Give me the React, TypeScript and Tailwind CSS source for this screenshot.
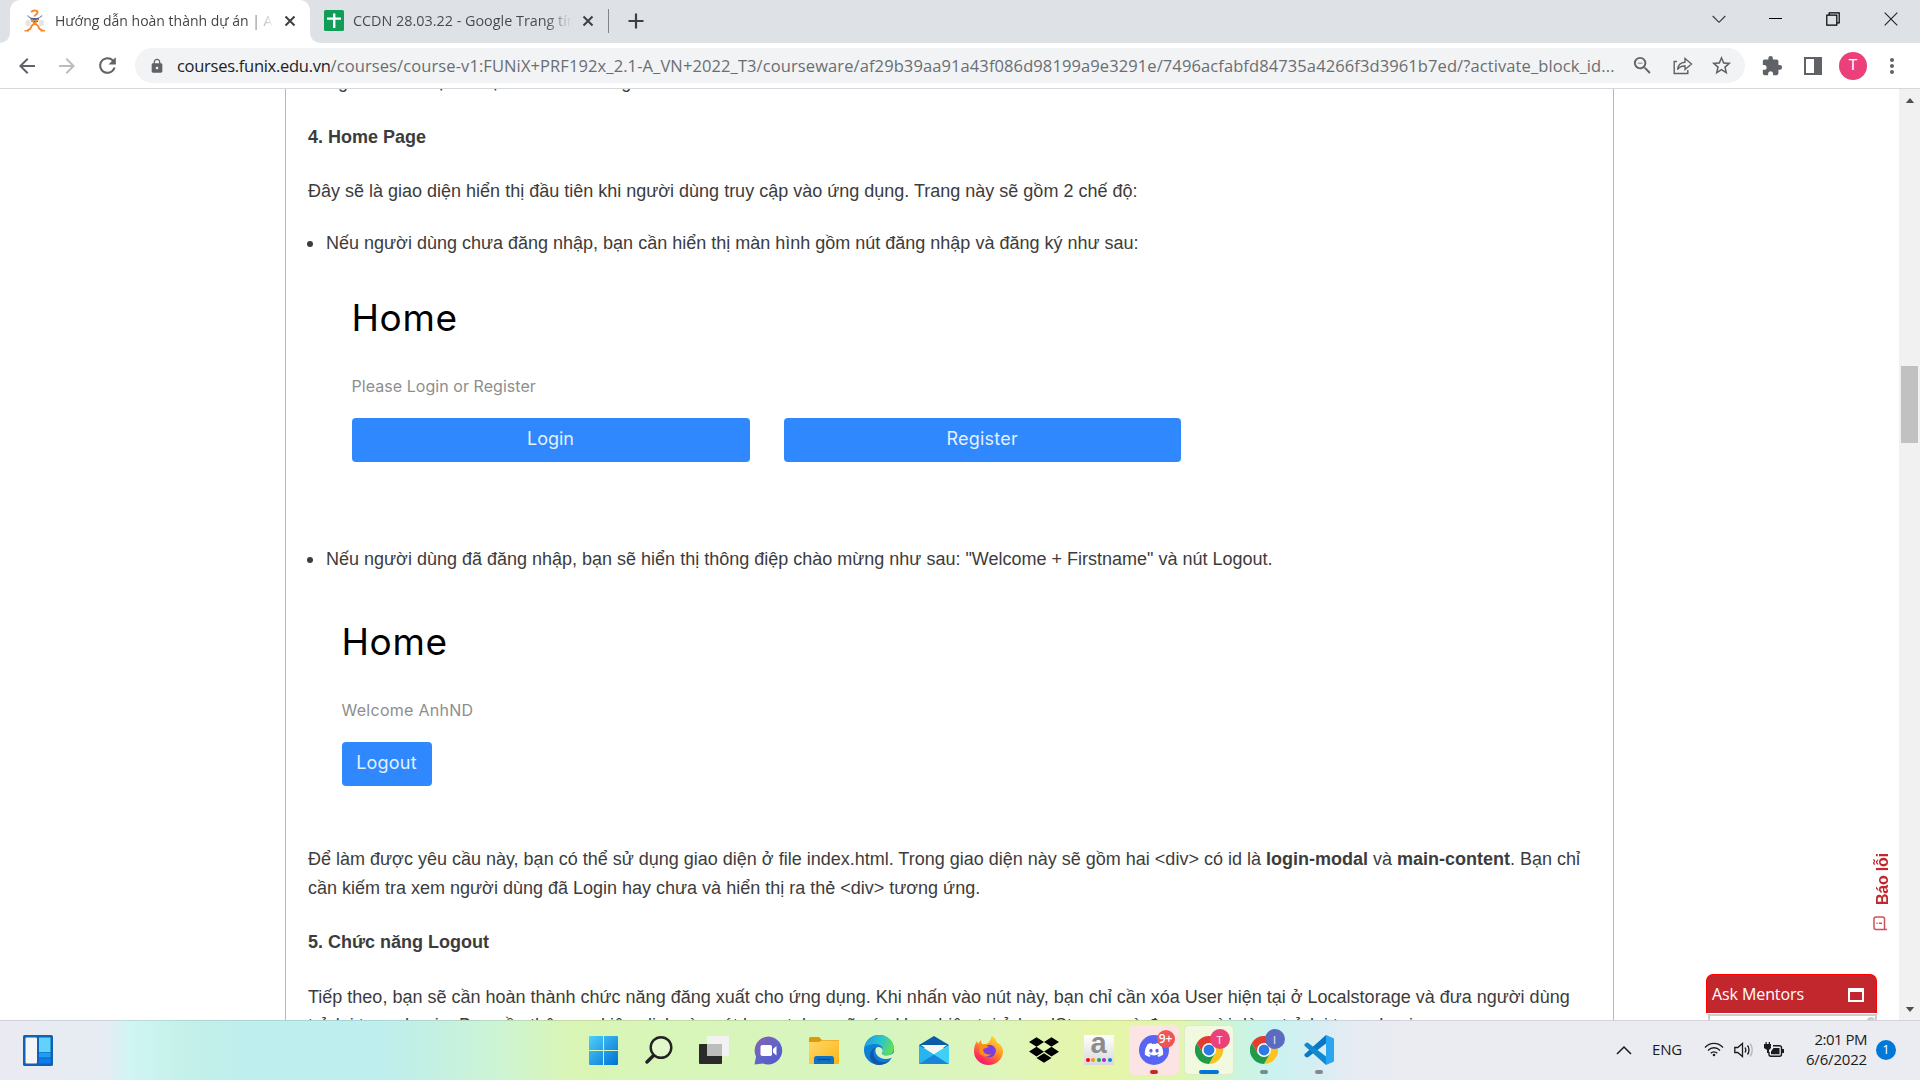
import React from 'react';
import {
  MdArrowBack,
  MdArrowForward,
  MdExtension,
  MdLock,
  MdMoreVert,
  MdRefresh,
  MdStarBorder,
  MdZoomOut,
} from 'react-icons/md';
import { FaDiscord, FaDropbox } from 'react-icons/fa';

/* ---------- Browser chrome ---------- */

function CloseX({ className }: { className: string }) {
  return (
    <svg viewBox="0 0 12 12" className={className} fill="none" stroke="#3c4043" strokeWidth="2">
      <path d="M1.5 1.5l9 9M10.5 1.5l-9 9" />
    </svg>
  );
}

function FunixIcon() {
  return (
    <svg viewBox="0 0 22 23" className="h-[23px] w-[22px] shrink-0" fill="none">
      <ellipse cx="4" cy="14" rx="2.6" ry="3.2" fill="#e2e5ea" />
      <ellipse cx="17.500" cy="14" rx="2.6" ry="3.2" fill="#e2e5ea" />
      <path d="M7.5 3.4C8 .8 13.500 .6 13.500 3.6c0 2-2.9 1.800-2.900 4" stroke="#f58a2c" strokeWidth="2" />
      <path d="M3.500 6.500c2 3.200 4 3 7 3.500 3-.500 5.500-.300 7.500-3.500" stroke="#8b8f9c" strokeWidth="1.200" />
      <path d="M6.500 10h8.500M7.500 12.200h6.500" stroke="#2f4f86" strokeWidth="1.500" />
      <path d="M7.500 10.500l3.200 4 3.300-4M10.700 14l-3.200 3-1 2.500L3 21.800M10.700 14l3.500 3 1 2.500 3.500 2.300" stroke="#f58a2c" strokeWidth="1.900" />
      <path d="M.5 21.800h4.500M16.500 21.800H21" stroke="#f58a2c" strokeWidth="1.600" />
    </svg>
  );
}

function SheetsIcon() {
  return (
    <svg viewBox="0 0 20 21" className="h-[21px] w-5 shrink-0">
      <rect width="20" height="21" rx="1.600" fill="#0f9d58" />
      <path d="M9 3.500h2.400v3.900H17v2.400h-5.600V18H9V9.800H3V7.400h6z" fill="#fff" />
    </svg>
  );
}

function TabStrip() {
  return (
    <div className="flex h-[43px] bg-[#dee1e6]">
      <div className="flex w-[10px] items-end bg-white">
        <div className="h-full w-full rounded-br-[10px] bg-[#dee1e6]" />
      </div>
      <div className="bg-[#dee1e6]">
        <div className="flex h-full w-[300px] items-center rounded-t-[10px] bg-white pb-[2px] pl-[14px]">
          <FunixIcon />
          <div className="ml-[9px] w-[219px] overflow-hidden whitespace-nowrap bg-gradient-to-r from-[#3c4043] from-88% to-transparent bg-clip-text text-[14px] leading-6 text-transparent">
            Hướng dẫn hoàn thành dự án | AS
          </div>
          <CloseX className="ml-[10px] h-3 w-3 shrink-0" />
        </div>
      </div>
      <div className="bg-white">
        <div className="flex h-full w-[299px] items-center rounded-bl-[10px] bg-[#dee1e6] pb-[2px] pl-[14px]">
          <SheetsIcon />
          <div className="ml-[9px] w-[219px] overflow-hidden whitespace-nowrap bg-gradient-to-r from-[#45494d] from-88% to-transparent bg-clip-text text-[14.400px] leading-6 tracking-[-0.01px] text-transparent">
            CCDN 28.03.22 - Google Trang tính
          </div>
          <CloseX className="ml-[10px] h-3 w-3 shrink-0" />
          <div className="ml-auto h-6 w-px bg-[#808387]" />
        </div>
      </div>
      <div className="flex items-center pb-px pl-[19px]">
        <svg viewBox="0 0 16 16" className="h-4 w-4" stroke="#3c4043" strokeWidth="2.2">
          <path d="M8 .5v15M.5 8h15" />
        </svg>
      </div>
      <div className="ml-auto flex h-[37px] items-center pr-[22px]">
        <svg viewBox="0 0 14 14" className="h-[14px] w-[14px]" fill="none" stroke="#333" strokeWidth="1.100">
          <path d="M.7 4l6.300 6.300L13.300 4" />
        </svg>
        <div className="ml-[43px] h-px w-[13px] bg-black" />
        <svg viewBox="0 0 14 14" className="ml-11 h-[14px] w-[14px]" fill="none" stroke="#000" strokeWidth="1.200">
          <path d="M.8 3.200h10v10h-10zM3.200 3V.8h10v10H11" />
        </svg>
        <svg viewBox="0 0 14 14" className="ml-11 h-[14px] w-[14px]" stroke="#222" strokeWidth="1.100">
          <path d="M.7.7l12.600 12.600M13.300.7L.7 13.300" />
        </svg>
      </div>
    </div>
  );
}

function Toolbar() {
  return (
    <div className="flex h-[46px] items-center border-b border-[#d5d7da] bg-white pl-[15px] text-[#5f6368]">
      <MdArrowBack className="h-6 w-6" />
      <MdArrowForward className="ml-4 h-6 w-6 text-[#bbbdc0]" />
      <MdRefresh className="ml-4 h-[25px] w-[25px]" />
      <div className="ml-[15px] flex h-[35px] w-[1610px] shrink-0 items-center rounded-full bg-[#f1f3f4] pl-[14px]">
        <MdLock className="h-4 w-4" />
        <div className="ml-3 whitespace-nowrap text-[16.500px] leading-6 tracking-[0.100px] text-[#6a6e73]">
          <span className="tracking-[-0.280px] text-[#202124]">courses.funix.edu.vn</span>
          /courses/course-v1:FUNiX+PRF192x_2.1-A_VN+2022_T3/courseware/af29b39aa91a43f086d98199a9e3291e/7496acfabfd84735a4266f3d3961b7ed/?activate_block_id...
        </div>
        <div className="ml-auto flex items-center pr-3">
          <MdZoomOut className="h-[23px] w-[23px]" />
          <svg viewBox="0 0 20 18" className="ml-[19px] h-[18px] w-5" fill="none" stroke="#5f6368" strokeWidth="1.400">
            <path d="M4 4.500H1.200v12h13.600v-3.500M4.500 12.500C5 8 7.500 5.500 12 5.200V1.500l6.500 5.500-6.500 5.500V9c-3.500-.2-5.800 1-7.500 3.500z" />
          </svg>
          <MdStarBorder className="ml-[17px] h-[23px] w-[23px]" />
        </div>
      </div>
      <MdExtension className="ml-4 h-[22px] w-[22px]" />
      <div className="ml-[21px] flex h-[18px] w-[18px] justify-end border-[2.500px] border-[#5f6368]">
        <div className="w-[6px] bg-[#5f6368]" />
      </div>
      <div className="ml-[17px] flex h-7 w-7 items-center justify-center rounded-full bg-[#ec407a] font-[Roboto] text-[15px] text-white">
        T
      </div>
      <MdMoreVert className="ml-[13px] h-6 w-6" />
    </div>
  );
}

/* ---------- Lesson page ---------- */

function Article() {
  return (
    <article className="w-[1329px] shrink-0 border-x border-[#b8b8b8] pl-[22px] font-['Liberation_Sans',sans-serif] text-[18px] leading-[29px] text-[#3c3c3c]">
      <div className="mt-[-21px] whitespace-nowrap">đăng tin và lưu lại dữ liệu vào các khung</div>
      <h4 className="mt-[26px] font-bold">4. Home Page</h4>
      <p className="mt-[25px]">
        Đây sẽ là giao diện hiển thị đầu tiên khi người dùng truy cập vào ứng dụng. Trang này sẽ gồm 2 chế độ:
      </p>
      <div className="mt-[23px] flex items-center">
        <span className="ml-[-1px] mr-[13px] h-[6px] w-[6px] rounded-full bg-[#3c3c3c]" />
        <p>Nếu người dùng chưa đăng nhập, bạn cần hiển thị màn hình gồm nút đăng nhập và đăng ký như sau:</p>
      </div>

      <section className="mt-10 pl-[43.500px] font-[Inter,sans-serif]">
        <div className="text-[37px] leading-10 tracking-[0.600px] text-black">Home</div>
        <div className="mt-9 text-[16px] leading-6 tracking-[0.050px] text-[#8e8e8e]">Please Login or Register</div>
        <div className="mt-5 flex gap-[34px] text-[18px] text-[#e4f0ff]">
          <div className="flex h-[43.500px] w-[398px] items-center justify-center rounded-[4px] bg-[#2f88fe] pb-[2px]">
            Login
          </div>
          <div className="flex h-[43.500px] w-[397.500px] items-center justify-center rounded-[4px] bg-[#2f88fe] pb-[2px] tracking-[0.220px]">
            Register
          </div>
        </div>
      </section>

      <div className="mt-[83.500px] flex items-center">
        <span className="ml-[-1px] mr-[13px] h-[6px] w-[6px] rounded-full bg-[#3c3c3c]" />
        <p>
          Nếu người dùng đã đăng nhập, bạn sẽ hiển thị thông điệp chào mừng như sau: "Welcome + Firstname" và nút Logout.
        </p>
      </div>

      <section className="mt-12 pl-[33.500px] font-[Inter,sans-serif]">
        <div className="text-[37px] leading-10 tracking-[0.600px] text-black">Home</div>
        <div className="mt-9 text-[16px] leading-6 tracking-[0.280px] text-[#8e8e8e]">Welcome AnhND</div>
        <div className="mt-5 flex h-[43.500px] w-[90px] items-center justify-center rounded-[4px] bg-[#2f88fe] pb-[2px] text-[18px] tracking-[0.200px] text-[#e4f0ff]">
          Logout
        </div>
      </section>

      <p className="mt-[59.500px] whitespace-nowrap">
        Để làm được yêu cầu này, bạn có thể sử dụng giao diện ở file index.html. Trong giao diện này sẽ gồm hai
        &lt;div&gt; có id là <b>login-modal</b> và <b>main-content</b>. Bạn chỉ
        <br />
        cần kiếm tra xem người dùng đã Login hay chưa và hiển thị ra thẻ &lt;div&gt; tương ứng.
      </p>
      <h4 className="mt-[25px] font-bold">5. Chức năng Logout</h4>
      <p className="mt-[26px] whitespace-nowrap">
        Tiếp theo, bạn sẽ cần hoàn thành chức năng đăng xuất cho ứng dụng. Khi nhấn vào nút này, bạn chỉ cần xóa User
        hiện tại ở Localstorage và đưa người dùng
      </p>
      <p className="mt-[-1px] whitespace-nowrap">
        trở lại trang Login. Bạn cần thêm sự kiện click vào nút logout, bạn sẽ xóa User hiện tại ở localStorage và đưa
        người dùng trở lại trang Login.
      </p>
    </article>
  );
}

function Scrollbar() {
  return (
    <div className="ml-auto flex w-[21px] flex-col items-center bg-[#f1f1f1]">
      <svg viewBox="0 0 10 6" className="mt-[9px] h-[5px] w-[10px]">
        <path d="M5 0l5 6H0z" fill="#505050" />
      </svg>
      <div className="mt-[263px] h-[77px] w-[17px] bg-[#c1c1c1]" />
      <svg viewBox="0 0 10 6" className="mb-2 mt-auto h-[5px] w-[10px]">
        <path d="M5 6l5-6H0z" fill="#505050" />
      </svg>
    </div>
  );
}

function FloatingTools() {
  return (
    <>
      <div className="absolute right-[29px] top-[762px] flex w-5 flex-col items-center text-[#c1272d]">
        <div className="ml-1 h-[57px] rotate-180 whitespace-nowrap text-center font-['Liberation_Sans',sans-serif] text-[16px] font-bold leading-5 tracking-[-0.200px] [writing-mode:vertical-rl]">
          Báo lỗi
        </div>
        <svg viewBox="0 0 15 15" className="mr-[2px] mt-2 h-[15px] w-[15px]" fill="none" stroke="#cf5157" strokeWidth="1.500">
          <path d="M14 13.500h-3M11.500 12V3a2 2 0 0 0-2-2H3a2 2 0 0 0-2 2v8.500a2 2 0 0 0 2 2h8.500z" />
          <path d="M3.500 7.200h1.200M6 7.200h3" />
        </svg>
      </div>
      <div className="absolute right-[43px] top-[885px] w-[171px]">
        <div className="flex h-[39px] items-center justify-between rounded-t-[7px] border border-b-0 border-[#ff0000] bg-[#c1272d] pb-px pl-[5px] pr-3">
          <span className="text-[16px] tracking-[-0.090px] text-white">Ask Mentors</span>
          <div className="mt-[3px] h-[14px] w-4 border-2 border-t-4 border-white" />
        </div>
        <div className="ml-[2px] mt-px flex h-3 justify-end border-2 border-[#ccc] bg-white">
          <div className="mt-[1px] h-2 w-2 rounded-full bg-[#ccc]" />
        </div>
      </div>
    </>
  );
}

/* ---------- Taskbar ---------- */

function ChromeIcon({ badge, color }: { badge: string; color: string }) {
  return (
    <div className="relative">
      <svg viewBox="0 0 48 48" className="h-[28px] w-[28px]">
        <path d="M24 12h20.800A24 24 0 0 1 24 48l10.400-18z" fill="#fcc31e" />
        <path d="M3.200 12A24 24 0 0 0 24 48l10.400-18L24 24l-10.400 6z" fill="#209a4b" />
        <path d="M24 12h20.800A24 24 0 0 0 3.200 12l10.400 18z" fill="#e33b2e" />
        <circle cx="24" cy="24" r="12" fill="#fff" />
        <circle cx="24" cy="24" r="9.300" fill="#2c7be5" />
      </svg>
      <div
        className={`absolute -right-[7px] -top-[7px] flex h-5 w-5 items-center justify-center rounded-full text-[11px] leading-none text-white/90 ${color}`}
      >
        {badge}
      </div>
    </div>
  );
}

function Cell({ tile = '', mark = '', children }: { tile?: string; mark?: string; children: React.ReactNode }) {
  return (
    <div className="relative flex h-[60px] w-[55px] items-center justify-center">
      <div className={`flex h-[50px] w-[50px] items-center justify-center rounded-[5px] ${tile}`}>{children}</div>
      {mark && <div className={`absolute bottom-[6px] h-1 rounded-full ${mark}`} />}
    </div>
  );
}

function TaskIcons() {
  return (
    <div className="flex">
      <Cell>
        <svg viewBox="0 0 29 29" className="h-[29px] w-[29px]">
          <defs>
            <linearGradient id="win" x1="0" y1="0" x2="1" y2="1">
              <stop offset="0" stopColor="#4fd0fb" />
              <stop offset="1" stopColor="#0070d2" />
            </linearGradient>
          </defs>
          <path d="M0 1a1 1 0 0 1 1-1h13v14H0zM15 0h13a1 1 0 0 1 1 1v13H15zM0 15h14v14H1a1 1 0 0 1-1-1zM15 15h14v13a1 1 0 0 1-1 1H15z" fill="url(#win)" />
        </svg>
      </Cell>
      <Cell>
        <svg viewBox="0 0 28 28" className="h-7 w-7" fill="none" stroke="#222">
          <circle cx="16" cy="11.500" r="10.300" fill="#fff" fillOpacity=".25" strokeWidth="2.400" />
          <path d="M8.500 19.500L2 26" strokeWidth="3.400" strokeLinecap="round" />
        </svg>
      </Cell>
      <Cell>
        <svg viewBox="0 0 30 28" className="h-7 w-[30px]">
          <rect y="8" width="23" height="20" rx="1" fill="#2a2a2a" />
          <rect x="8" width="22" height="20" rx="1" fill="#f2f2f2" />
          <rect x="8" y="8" width="15" height="12" fill="#bdbdbd" />
        </svg>
      </Cell>
      <Cell>
        <svg viewBox="0 0 29 29" className="h-[29px] w-[29px]">
          <defs>
            <linearGradient id="chat" x1="0" y1="0" x2="1" y2="1">
              <stop offset="0" stopColor="#8a63ab" />
              <stop offset=".5" stopColor="#6264c8" />
              <stop offset="1" stopColor="#5059c9" />
            </linearGradient>
          </defs>
          <path d="M14.500.500a14 14 0 1 1-5.500 27L.5 28.500l1.500-8A14 14 0 0 1 14.500.500z" fill="url(#chat)" />
          <rect x="6.500" y="9" width="11.500" height="11" rx="1.800" fill="#fff" />
          <path d="M19 13l3.500-3v9.500L19 16.500z" fill="#fff" />
        </svg>
      </Cell>
      <Cell>
        <svg viewBox="0 0 30 27" className="h-[27px] w-[30px]">
          <defs>
            <linearGradient id="folder" x1="0" y1="0" x2="1" y2="1">
              <stop offset="0" stopColor="#ffd76b" />
              <stop offset="1" stopColor="#fbb614" />
            </linearGradient>
          </defs>
          <path d="M0 1.500A1.500 1.500 0 0 1 1.500 0H10l3 3h17v6H0z" fill="#dd9a06" />
          <path d="M0 5h10l3-1.500h17V27H0z" fill="url(#folder)" />
          <path d="M5 27v-5.500A2.500 2.500 0 0 1 7.500 19h15a2.500 2.500 0 0 1 2.500 2.500V27z" fill="#0f72c4" />
          <path d="M8.500 22.500h13" stroke="#0a4a8c" strokeWidth="1.300" />
        </svg>
      </Cell>
      <Cell>
        <svg viewBox="0 0 30 30" className="h-[30px] w-[30px]">
          <defs>
            <linearGradient id="edgeTop" x1="0" y1=".3" x2="1" y2=".6">
              <stop offset="0" stopColor="#1c9fe0" />
              <stop offset=".5" stopColor="#2cc3cf" />
              <stop offset="1" stopColor="#66e04e" />
            </linearGradient>
          </defs>
          <circle cx="15" cy="15" r="15" fill="#0c80d8" />
          <path d="M.3 12.500C1.500 5 7.500 0 15 0c8.800 0 15 6.500 15 13 0 4.500-3.400 7.500-7.500 7.500-3 0-5.300-1.200-4.500-2.600 2.200-3.600.2-8.900-6.500-8.900-4.500 0-9 1.500-11.200 3.500z" fill="url(#edgeTop)" />
          <path d="M12 12.500c-3 2-3.500 7-.5 11 3.500 4.500 10 5 15.500.800-3 4-7 5.700-12 5.700C9.500 30 5.500 25.500 6 20c.3-3.500 2.500-6.500 6-7.500z" fill="#0f59a8" />
          <path d="M12.500 12.500c-1.500 1.500-1.500 4.500.5 7.500 3 4.200 9 5 14 3 1-.4 1.500.2 1.200.8l3 1V17l-4 2.500c-4 2-9 1-9.500-1-.2-1 1.500-1.500.8-4-.7-2-4-3.500-6-2z" fill="#daf5c0" />
        </svg>
      </Cell>
      <Cell>
        <svg viewBox="0 0 30 28" className="h-7 w-[30px]">
          <path d="M0 9L15 0l15 9v3H0z" fill="#0a5ca8" />
          <path d="M2 9h26L15 19z" fill="#f3f5f7" />
          <path d="M0 9l15 9.500L30 9v19H0z" fill="#28b4ee" />
          <path d="M0 28L15 18.500 30 28z" fill="#1a86d8" />
          <path d="M30 9L15 18.500 30 28z" fill="#3fd0f8" />
        </svg>
      </Cell>
      <Cell>
        <svg viewBox="0 0 29 29" className="h-[29px] w-[29px]">
          <defs>
            <linearGradient id="fox" x1=".8" y1="0" x2=".2" y2="1">
              <stop offset="0" stopColor="#ffe03a" />
              <stop offset=".45" stopColor="#ff9022" />
              <stop offset=".8" stopColor="#ff2f55" />
              <stop offset="1" stopColor="#e01587" />
            </linearGradient>
          </defs>
          <path d="M18 0c3 2 4 4 5 6.500 3.500 1.500 6 5 6 9C29 23 22.500 29 14.500 29S0 23 0 15.500C0 11 1 8 3 5l1 3 2.500-4 1.500 4h4c3 0 4-4 6-8z" fill="url(#fox)" />
          <circle cx="15.500" cy="15" r="6.300" fill="#7a3fe0" />
          <path d="M6 10c3-2 7-1 9 1-3 .5-4 2-6 2 0 4 4 6.500 8 5-2 4-11 3-12-3z" fill="#ff8a1e" />
        </svg>
      </Cell>
      <Cell>
        <FaDropbox className="h-[30px] w-[30px] text-black" />
      </Cell>
      <Cell>
        <div className="flex h-[30px] w-[30px] flex-col items-center bg-gradient-to-b from-white to-[#d9d9d9]">
          <span className="h-[21px] font-['Liberation_Sans',sans-serif] text-[29px] font-bold leading-[17px] text-[#8c8c8c]">
            a
          </span>
          <div className="mt-[2px] flex gap-[1.500px]">
            <i className="h-1 w-1 rounded-full bg-[#f00]" />
            <i className="h-1 w-1 rounded-full bg-[#f7941d]" />
            <i className="h-1 w-1 rounded-full bg-[#1fa850]" />
            <i className="h-1 w-1 rounded-full bg-[#9b30d0]" />
            <i className="h-1 w-1 rounded-full bg-[#1080e0]" />
          </div>
        </div>
      </Cell>
      <Cell tile="bg-[#fce4e4]" mark="w-2 bg-[#c42b1c]">
        <div className="relative flex h-[30px] w-[30px] items-center justify-center rounded-full bg-[#5865f2]">
          <FaDiscord className="h-5 w-5 text-white" />
          <div className="absolute -right-[6px] -top-[5px] flex h-[18px] w-[18px] items-center justify-center rounded-full bg-[#f05454] text-[12px] font-semibold leading-none text-white">
            9+
          </div>
        </div>
      </Cell>
      <Cell tile="bg-[#f1fade] border border-[#dcebc8]" mark="w-5 bg-[#0078d4]">
        <ChromeIcon badge="T" color="bg-[#ec407a]" />
      </Cell>
      <Cell mark="w-2 bg-[#7d8a8a]">
        <ChromeIcon badge="I" color="bg-[#5c6bc0]" />
      </Cell>
      <Cell mark="w-2 bg-[#85898f]">
        <svg viewBox="0 0 30 30" className="h-[30px] w-[30px]">
          <path d="M22 0v8.500L4 22.200 2.800 22.600 0.500 21v-1.800z" fill="#0a78c4" />
          <path d="M22 30v-8.500L4 7.800l-1.200-.4L.5 9v1.800z" fill="#1088d2" />
          <path d="M22 0l7 3a1.500 1.500 0 0 1 1 1.400v21.200a1.500 1.500 0 0 1-1 1.400l-7 3z" fill="#2aa5f2" />
        </svg>
      </Cell>
    </div>
  );
}

function Tray() {
  return (
    <div className="ml-auto flex items-center pb-px pr-6 text-[#1b1b1b]">
      <svg viewBox="0 0 16 10" className="h-[10px] w-4" fill="none" stroke="#1b1b1b" strokeWidth="1.500">
        <path d="M1 9l7-7 7 7" />
      </svg>
      <span className="ml-5 text-[15px] tracking-[-0.180px]">ENG</span>
      <svg viewBox="0 0 20 15" className="ml-[22px] h-[15px] w-5" fill="none" stroke="#1b1b1b" strokeWidth="1.400">
        <path d="M1 5.500c5-5.500 13-5.500 18 0M4 8.500c3.400-3.600 8.600-3.600 12 0M6.800 11.300c1.800-1.900 4.600-1.900 6.400 0" />
        <circle cx="10" cy="13" r="1.300" fill="#1b1b1b" stroke="none" />
      </svg>
      <svg viewBox="0 0 20 16" className="ml-[10px] h-4 w-5" fill="none" stroke="#1b1b1b" strokeWidth="1.300">
        <path d="M.8 5.500h3L8.500 1.500v13L3.800 10.500h-3zM11 5.500c1 1.500 1 3.500 0 5M13.500 3.500c2 2.500 2 6.500 0 9" />
        <path d="M16 1.500c3 3.500 3 9.500 0 13" stroke="#b5b5ba" />
      </svg>
      <svg viewBox="0 0 20 16" className="ml-[10px] h-4 w-5">
        <path d="M9 3.700h6.500a2 2 0 0 1 2 2v6.600a2 2 0 0 1-2 2H7a2 2 0 0 1-2-2V10" fill="none" stroke="#1b1b1b" strokeWidth="1.400" />
        <path d="M7 12.300V9.500L9.500 6h6v6.300zM18 7h2v4h-2zM1.500 0h1.200v2h2V0H6v2h1v4L5 8v3H3V8L0 6V2h1.500z" fill="#1b1b1b" />
      </svg>
      <div className="ml-[10px] flex w-[73px] flex-col items-end pb-[2px] text-[15px] leading-5">
        <span className="tracking-[-0.500px]">2:01 PM</span>
        <span className="tracking-[-0.180px]">6/6/2022</span>
      </div>
      <div className="ml-[9px] flex h-5 w-5 items-center justify-center rounded-full bg-[#0078d7] text-[13px] leading-none text-white">
        1
      </div>
    </div>
  );
}

function Taskbar() {
  return (
    <div className="flex h-[60px] bg-[linear-gradient(90deg,#eaeaf2_0px,#e6ecf3_105px,#d0f5f4_130px,#c3f0e8_190px,#beeeee_250px,#beeeee_380px,#c3f0e3_430px,#cdf4d3_500px,#daf5b5_570px,#d8f6b8_650px,#d7f5c0_880px,#def5bb_1000px,#e6f5a8_1100px,#e2f6b0_1180px,#cdf4dc_1235px,#c9f3f0_1270px,#d5eef2_1315px,#e6ebf3_1350px,#ebebf2_1400px,#ebebf2_1920px)] shadow-[inset_0_1px_0_rgba(0,0,0,0.1)]">
      <div className="flex w-[576px] items-center pl-[23px]">
        <svg viewBox="0 0 30 31" className="h-[31px] w-[30px]">
          <rect width="30" height="31" rx="1.500" fill="#0f62b4" />
          <rect x="2.500" y="2.500" width="11.500" height="26" rx="1" fill="#f5f5f7" />
          <rect x="16" y="2.500" width="11.500" height="14.500" fill="#62d2fb" />
          <rect x="16" y="17.500" width="11.500" height="5" fill="#1f9df5" />
          <rect x="16" y="23.500" width="11.500" height="5" fill="#0a7ff0" />
        </svg>
      </div>
      <TaskIcons />
      <Tray />
    </div>
  );
}

export default function App() {
  return (
    <div className="flex h-[1080px] w-[1920px] flex-col overflow-hidden bg-white font-['Open_Sans',sans-serif]">
      <TabStrip />
      <Toolbar />
      <main className="relative flex h-[931px] overflow-hidden bg-white pl-[285px]">
        <Article />
        <Scrollbar />
        <FloatingTools />
      </main>
      <Taskbar />
    </div>
  );
}
